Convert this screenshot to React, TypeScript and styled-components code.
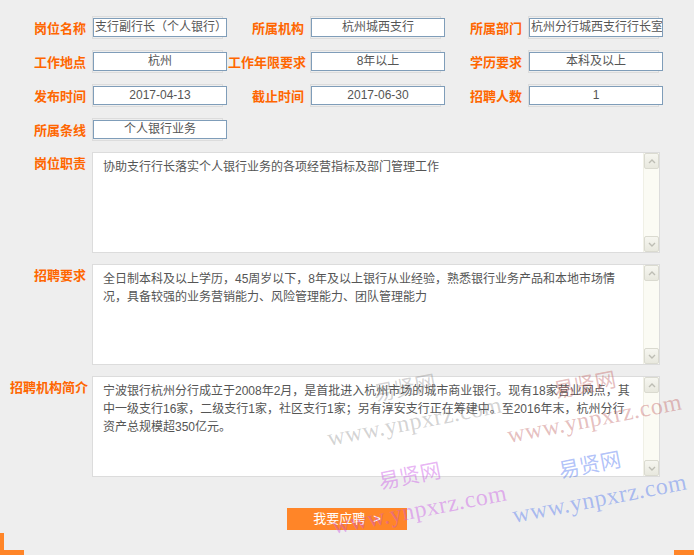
import React from "react";
import styled, { createGlobalStyle } from "styled-components";

const GlobalStyle = createGlobalStyle`
  html, body {
    margin: 0;
    padding: 0;
    background: #eeeeee;
  }
  body {
    font-family: "Liberation Sans", "Noto Sans CJK SC", sans-serif;
    font-size: 12px;
    color: #555555;
  }
`;

const Page = styled.div`
  position: relative;
  width: 694px;
  height: 555px;
  overflow: hidden;
  display: flex;
  flex-direction: column;
  background: #eeeeee;
`;

const Form = styled.div`
  display: flex;
  flex-direction: column;
  gap: 11px;
  padding: 16px 0 0 10px;
`;

const FieldRow = styled.div`
  display: flex;
`;

const Field = styled.div`
  display: flex;
  align-items: center;
  width: 218px;
`;

const Label = styled.div<{ $top?: number }>`
  width: 76px;
  flex: none;
  margin-right: 6px;
  padding-top: ${(p) => p.$top ?? 0}px;
  text-align: right;
  white-space: nowrap;
  font-family: "Noto Sans CJK SC", sans-serif;
  font-weight: 700;
  font-size: 13px;
  line-height: 18px;
  color: #ff6600;
`;

const InputFrame = styled.div`
  width: 131px;
  height: 23px;
  box-sizing: border-box;
  border: 1px solid #dcdcdc;
  flex: none;
`;

const InputBox = styled.div`
  width: 134px;
  height: 19px;
  margin-top: 1px;
  box-sizing: border-box;
  border: 1px solid #7f9db9;
  background: #ffffff;
  padding: 0 1px;
  text-align: center;
  white-space: nowrap;
  overflow: hidden;
  font-size: 12px;
  line-height: 17px;
  color: #555555;
`;

const TextRow = styled.div`
  display: flex;
  align-items: flex-start;
`;

const TextBox = styled.div`
  width: 568px;
  height: 101px;
  box-sizing: border-box;
  border: 1px solid #dcdcdc;
  background: #ffffff;
  display: flex;
`;

const TextContent = styled.div`
  flex: 1;
  padding: 5px 10px;
  font-size: 12px;
  line-height: 18px;
  color: #555555;
`;

const Line = styled.div`
  white-space: nowrap;
`;

const ScrollTrack = styled.div`
  width: 15px;
  flex: none;
  display: flex;
  flex-direction: column;
  justify-content: space-between;
  background: #fbfbf4;
  border-left: 1px solid #f0f0e6;
`;

const ScrollButton = styled.div`
  height: 16px;
  box-sizing: border-box;
  border: 1px solid #dadad0;
  border-radius: 2px;
  background: linear-gradient(#f6f6f0, #e8e8de);
  display: flex;
  align-items: center;
  justify-content: center;
`;

const ButtonRow = styled.div`
  display: flex;
  justify-content: center;
  margin-top: 31px;
`;

const ApplyButton = styled.button`
  width: 120px;
  height: 22px;
  border: none;
  padding: 0;
  background: #ff8528;
  color: #ffffff;
  font-family: "Liberation Sans", "Noto Sans CJK SC", sans-serif;
  font-size: 13px;
  line-height: 22px;
  cursor: pointer;
`;

const Arrow = styled.span`
  margin-left: 8px;
`;

const Footer = styled.div`
  margin-top: auto;
  height: 22px;
  display: flex;
  justify-content: space-between;
  align-items: flex-end;
`;

const CornerLeft = styled.div`
  width: 24px;
  height: 22px;
  box-sizing: border-box;
  border-left: 4px solid #ff8528;
  border-bottom: 5px solid #ff8528;
`;

const CornerRight = styled.div`
  width: 20px;
  height: 5px;
  background: #ff8528;
`;

const Watermark = styled.div<{ $color: string }>`
  position: absolute;
  transform: rotate(-11deg);
  transform-origin: 0 0;
  pointer-events: none;
  color: ${(p) => p.$color};
  display: flex;
  flex-direction: column;
`;

const WmBrand = styled.div`
  margin-left: 54px;
  font-family: "Noto Sans CJK SC", sans-serif;
  font-size: 21px;
  line-height: 26px;
  white-space: nowrap;
`;

const WmUrl = styled.div`
  margin-top: 10px;
  font-family: "Liberation Serif", serif;
  font-size: 24px;
  line-height: 26px;
  letter-spacing: 0.5px;
  white-space: nowrap;
`;

const Chevron = ({ up }: { up?: boolean }) => (
  <svg width="8" height="5" viewBox="0 0 8 5">
    <path
      d={up ? "M1 4 L4 1 L7 4" : "M1 1 L4 4 L7 1"}
      fill="none"
      stroke="#bdbdb4"
      strokeWidth="1.4"
    />
  </svg>
);

const fields: [string, string][][] = [
  [
    ["岗位名称", "支行副行长（个人银行）"],
    ["所属机构", "杭州城西支行"],
    ["所属部门", "杭州分行城西支行行长室"],
  ],
  [
    ["工作地点", "杭州"],
    ["工作年限要求", "8年以上"],
    ["学历要求", "本科及以上"],
  ],
  [
    ["发布时间", "2017-04-13"],
    ["截止时间", "2017-06-30"],
    ["招聘人数", "1"],
  ],
  [["所属条线", "个人银行业务"]],
];

const texts: [string, string[]][] = [
  ["岗位职责", ["协助支行行长落实个人银行业务的各项经营指标及部门管理工作"]],
  [
    "招聘要求",
    [
      "全日制本科及以上学历，45周岁以下，8年及以上银行从业经验，熟悉银行业务产品和本地市场情",
      "况，具备较强的业务营销能力、风险管理能力、团队管理能力",
    ],
  ],
  [
    "招聘机构简介",
    [
      "宁波银行杭州分行成立于2008年2月，是首批进入杭州市场的城市商业银行。现有18家营业网点，其",
      "中一级支行16家，二级支行1家，社区支行1家；另有淳安支行正在筹建中。至2016年末，杭州分行",
      "资产总规模超350亿元。",
    ],
  ],
];

const marks = [
  { x: 318, y: 390, c: "rgba(120,120,120,0.32)" },
  { x: 498, y: 387, c: "rgba(190,90,90,0.4)" },
  { x: 323, y: 478, c: "rgba(200,80,230,0.42)" },
  { x: 503, y: 467, c: "rgba(70,110,240,0.42)" },
];

export default function App() {
  return (
    <>
      <GlobalStyle />
      <Page>
        <Form>
          {fields.map((row, i) => (
            <FieldRow key={i}>
              {row.map(([label, value]) => (
                <Field key={label}>
                  <Label>{label}</Label>
                  <InputFrame>
                    <InputBox>{value}</InputBox>
                  </InputFrame>
                </Field>
              ))}
            </FieldRow>
          ))}
          {texts.map(([label, lines]) => (
            <TextRow key={label}>
              <Label $top={2}>{label}</Label>
              <TextBox>
                <TextContent>
                  {lines.map((l) => (
                    <Line key={l}>{l}</Line>
                  ))}
                </TextContent>
                <ScrollTrack>
                  <ScrollButton>
                    <Chevron up />
                  </ScrollButton>
                  <ScrollButton>
                    <Chevron />
                  </ScrollButton>
                </ScrollTrack>
              </TextBox>
            </TextRow>
          ))}
        </Form>
        <ButtonRow>
          <ApplyButton>
            我要应聘<Arrow>&gt;</Arrow>
          </ApplyButton>
        </ButtonRow>
        <Footer>
          <CornerLeft />
          <CornerRight />
        </Footer>
        {marks.map((m, i) => (
          <Watermark key={i} $color={m.c} style={{ left: m.x, top: m.y }}>
            <WmBrand>易贤网</WmBrand>
            <WmUrl>www.ynpxrz.com</WmUrl>
          </Watermark>
        ))}
      </Page>
    </>
  );
}
